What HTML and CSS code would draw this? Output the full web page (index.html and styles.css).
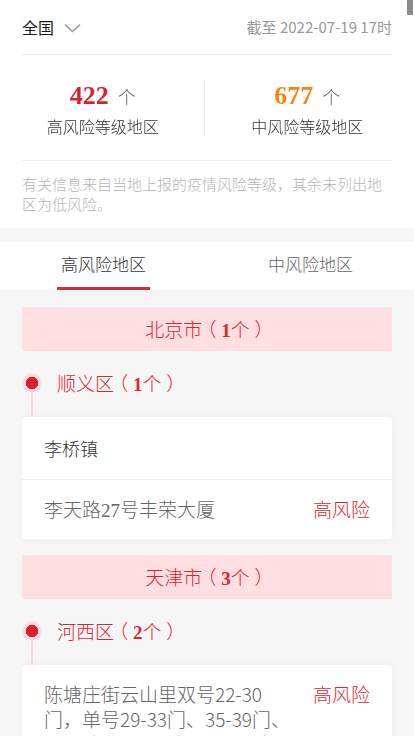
FILE: index.html
```html
<!DOCTYPE html>
<html lang="zh-CN">
<head>
<meta charset="utf-8">
<title>风险等级地区</title>
<link rel="stylesheet" href="styles.css">
</head>
<body>
<div class="scroll-thumb"></div>
<div class="top">
  <div class="head">
    <div class="region">全国
      <svg class="chev" width="17" height="10" viewBox="0 0 17 10"><path d="M1 1.5 L8.5 8.5 L16 1.5" fill="none" stroke="#999" stroke-width="1.6"/></svg>
    </div>
    <div class="date">截至 2022-07-19 17时</div>
  </div>
  <div class="stats">
    <div class="stat">
      <div class="count"><span class="num high">422</span><span class="unit">个</span></div>
      <div class="label">高风险等级地区</div>
    </div>
    <div class="stat stat-right">
      <div class="count"><span class="num mid">677</span><span class="unit">个</span></div>
      <div class="label">中风险等级地区</div>
    </div>
  </div>
  <p class="note">有关信息来自当地上报的疫情风险等级，其余未列出地区为低风险。</p>
</div>

<div class="tabs">
  <div class="tab active"><span class="tab-label">高风险地区</span></div>
  <div class="tab"><span class="tab-label">中风险地区</span></div>
</div>

<div class="list">
  <section class="prov">
    <div class="banner">北京市<span class="paren">（</span><b class="bnum">1</b>个<span class="paren">）</span></div>
    <div class="district">
      <div class="marker"><span class="dot"></span><span class="stem"></span></div>
      <div class="dname">顺义区<span class="paren">（</span><b class="bnum">1</b>个<span class="paren">）</span></div>
    </div>
    <div class="card">
      <div class="town">李桥镇</div>
      <div class="place"><span class="addr">李天路<span class="snum">27</span>号丰荣大厦</span><span class="risk">高风险</span></div>
    </div>
  </section>
  <section class="prov">
    <div class="banner">天津市<span class="paren">（</span><b class="bnum">3</b>个<span class="paren">）</span></div>
    <div class="district">
      <div class="marker"><span class="dot"></span><span class="stem"></span></div>
      <div class="dname">河西区<span class="paren">（</span><b class="bnum">2</b>个<span class="paren">）</span></div>
    </div>
    <div class="card">
      <div class="place"><span class="addr">陈塘庄街云山里双号22-30<br>门，单号29-33门、35-39门、<br>41-45门、47-51门、53-55门</span><span class="risk">高风险</span></div>
    </div>
  </section>
</div>
</body>
</html>
```

FILE: styles.css
```css
html { overflow: hidden; }
body {
  margin: 0;
  background: #f6f6f6;
  font-family: "Noto Sans CJK SC", "Noto Sans", sans-serif;
  font-weight: 300;
  color: #333;
  text-spacing-trim: space-all;
}
.scroll-thumb {
  position: fixed;
  top: 0;
  right: 1px;
  width: 6px;
  height: 15px;
  background: #8a8a8a;
}
.top {
  background: #fff;
  padding: 0 22px;
}
.head {
  height: 54px;
  display: flex;
  align-items: center;
  justify-content: space-between;
  border-bottom: 1px solid #eee;
  box-shadow: 0 1px 2px rgba(0,0,0,0.03);
}
.region {
  display: flex;
  align-items: center;
  font-size: 16px;
  color: #1a1a1a;
  line-height: 20px;
  font-weight: 400;
}
.chev { margin-left: 10px; margin-top: 1px; }
.date {
  font-size: 15px;
  color: #999;
  line-height: 20px;
  font-weight: 400;
}
.stats {
  display: flex;
  margin: 0 -22px;
  height: 106px;
  align-items: center;
  position: relative;
}
.stats::after {
  content: "";
  position: absolute;
  left: 22px;
  right: 22px;
  bottom: 0;
  border-bottom: 1px solid #eee;
}
.stat {
  flex: 1;
  display: flex;
  flex-direction: column;
  align-items: center;
  padding-top: 1px;
}
.stat-right {
  border-left: 1px solid #eee;
  margin-left: -2px;
  padding-right: 4px;
}
.count {
  display: flex;
  align-items: baseline;
  line-height: 32px;
}
.num {
  font-family: "Liberation Serif", serif;
  font-weight: bold;
  font-size: 26px;
}
.high { color: #dc1f2b; }
.mid { color: #f7860f; }
.unit {
  font-size: 18px;
  color: #666;
  margin-left: 9px;
}
.label {
  font-size: 16px;
  color: #333;
  line-height: 22px;
  margin-top: 3px;
}
.note {
  margin: 0;
  padding: 13px 0 14px;
  font-size: 15px;
  line-height: 20px;
  color: #b5b5b5;
}
.tabs {
  margin-top: 14px;
  background: #fff;
  display: flex;
  height: 48px;
}
.tab {
  flex: 1;
  display: flex;
  justify-content: center;
  align-items: flex-end;
}
.tab-label {
  font-size: 17px;
  line-height: 24px;
  color: #666;
  padding: 0 4px 11px;
  border-bottom: 3px solid transparent;
}
.tab.active .tab-label {
  color: #333;
  border-bottom-color: #c8303a;
}
.list {
  padding: 17px 22px 0;
}
.banner {
  height: 44px;
  line-height: 44px;
  background: #ffdfe2;
  color: #e0252f;
  text-align: center;
  font-size: 19px;
}
.paren {
  font-feature-settings: "halt";
  padding: 0 0.25em;
}
.bnum {
  font-family: "Liberation Serif", serif;
  font-weight: bold;
}
.district {
  display: flex;
  height: 66px;
}
.marker {
  width: 20px;
  display: flex;
  flex-direction: column;
  align-items: center;
  padding-top: 22px;
}
.dot {
  width: 20px;
  height: 20px;
  border-radius: 50%;
  background: radial-gradient(circle, #dc1f2f 0 6px, #ffdfe2 6.5px);
  flex: none;
}
.stem {
  flex: 1;
  width: 2px;
  background: #ffd6d9;
}
.dname {
  margin-left: 15px;
  padding-top: 22px;
  line-height: 20px;
  font-size: 19px;
  color: #e0252f;
}
.card {
  background: #fff;
  border-radius: 4px;
  box-shadow: 0 0 10px rgba(0,0,0,0.04);
  margin-bottom: 16px;
  overflow: hidden;
}
.town {
  padding: 19px 22px 18px;
  line-height: 25px;
  font-size: 18px;
  color: #333;
  border-bottom: 1px solid #eee;
}
.place {
  display: flex;
  justify-content: space-between;
  align-items: flex-start;
  gap: 8px;
  padding: 16px 22px;
  line-height: 25px;
  font-size: 19px;
}
.addr {
  color: #666;
  flex: 1;
}
.snum { font-family: "Liberation Serif", serif; }
.risk {
  color: #e0252f;
  flex: none;
}
```
